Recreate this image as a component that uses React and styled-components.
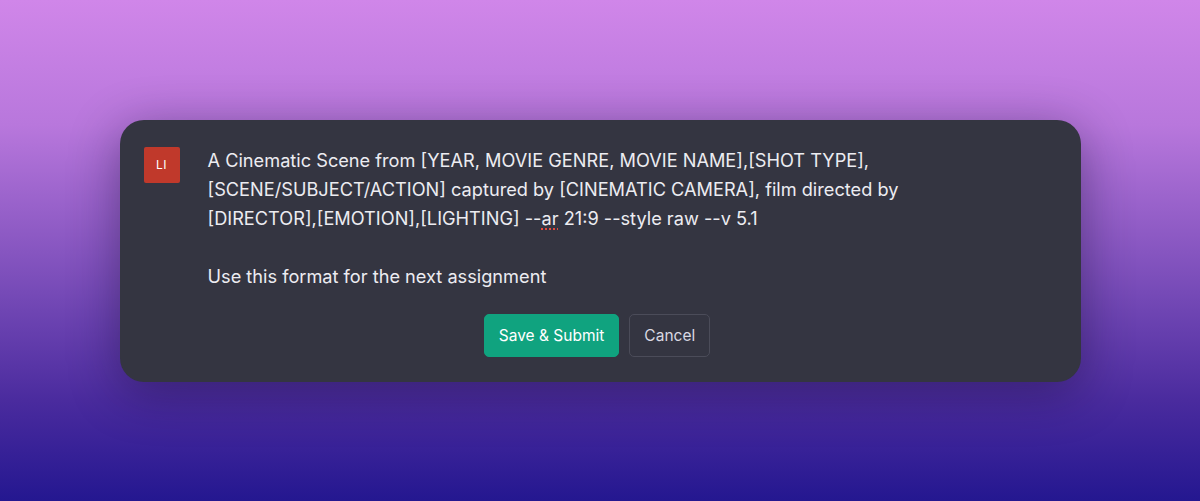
import styled, { createGlobalStyle } from "styled-components";

const GlobalStyle = createGlobalStyle`
  html, body {
    margin: 0;
    padding: 0;
  }

  body {
    font-family: Inter, "Noto Sans", sans-serif;
    -webkit-font-smoothing: antialiased;
  }
`;

const Page = styled.div`
  width: 100%;
  height: 501px;
  display: flex;
  align-items: center;
  justify-content: center;
  background: linear-gradient(
    180deg,
    #d086e9 0%,
    #b877dc 25%,
    #7d4fbb 55%,
    #4a2b9e 80%,
    #241790 100%
  );
`;

const Card = styled.div`
  width: 961px;
  height: 262px;
  box-sizing: border-box;
  padding: 27px 24px 25px;
  background-color: #343541;
  border-radius: 24px;
  box-shadow: 0 10px 50px rgba(20, 10, 50, 0.45);
  display: flex;
  flex-direction: column;
`;

const Row = styled.div`
  display: flex;
  gap: 28px;
`;

const Avatar = styled.div`
  width: 36px;
  height: 36px;
  flex-shrink: 0;
  border-radius: 2px;
  background-color: #c0392b;
  color: #fff;
  font-size: 12px;
  display: flex;
  align-items: center;
  justify-content: center;
  letter-spacing: 0.5px;
`;

const Message = styled.div`
  color: #ececf1;
  font-size: 18.2px;
  line-height: 29px;
  margin-top: -1px;
  white-space: pre-wrap;
`;

const Typo = styled.span`
  text-decoration-line: underline;
  text-decoration-style: dotted;
  text-decoration-color: #e5483d;
  text-decoration-thickness: 2px;
  text-underline-offset: 4px;
`;

const Actions = styled.div`
  margin-top: auto;
  padding-right: 6px;
  display: flex;
  justify-content: center;
  gap: 10px;
`;

const Button = styled.button`
  height: 43px;
  padding: 0 14px;
  border-radius: 5px;
  font-family: inherit;
  font-size: 15.5px;
  cursor: pointer;
  border: 1px solid ${(p) => (p.$primary ? "#10a37f" : "#4b4c59")};
  background-color: ${(p) => (p.$primary ? "#10a37f" : "transparent")};
  color: ${(p) => (p.$primary ? "#ffffff" : "#d9d9e3")};
`;

export default function App() {
  return (
    <>
      <GlobalStyle />
      <Page>
        <Card>
          <Row>
            <Avatar>LI</Avatar>
            <Message>
              A Cinematic Scene from [YEAR, MOVIE GENRE, MOVIE NAME],[SHOT TYPE],
              {"\n"}[SCENE/SUBJECT/ACTION] captured by [CINEMATIC CAMERA], film directed by
              {"\n"}[DIRECTOR],[EMOTION],[LIGHTING] --<Typo>ar</Typo> 21:9 --style raw --v 5.1
              {"\n\n"}Use this format for the next assignment
            </Message>
          </Row>
          <Actions>
            <Button $primary>Save &amp; Submit</Button>
            <Button>Cancel</Button>
          </Actions>
        </Card>
      </Page>
    </>
  );
}
